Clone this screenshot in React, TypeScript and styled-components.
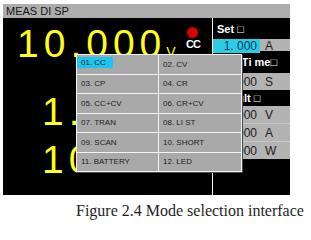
import React from 'react'
import styled, { createGlobalStyle } from 'styled-components'

const GlobalStyle = createGlobalStyle`
  html, body {
    margin: 0;
    padding: 0;
    background: #ffffff;
  }
`

const modes = [
  '01. CC', '02. CV',
  '03. CP', '04. CR',
  '05. CC+CV', '06. CR+CV',
  '07. TRAN', '08. LI ST',
  '09. SCAN', '10. SHORT',
  '11. BATTERY', '12. LED',
]

const readings = [
  { value: '10.000', unit: 'V', indent: 14, top: 2 },
  { value: '1.000', unit: 'A', indent: 39, top: 20 },
  { value: '10.000', unit: 'W', indent: 39, top: 0 },
]

const sideRows = [
  { label: 'Set \u25A1', values: [{ value: '1. 000', unit: 'A', active: true }], labelHeight: 21 },
  { label: 'Test Ti me\u25A1', values: [{ value: '1. 000', unit: 'S' }], labelHeight: 22 },
  { label: 'Result \u25A1', values: [
    { value: '10. 000', unit: 'V' },
    { value: '1. 000', unit: 'A' },
    { value: '10. 000', unit: 'W' },
  ], labelHeight: 16 },
]

const Page = styled.div`
  padding: 4px 0 0 3px;
`

const Screen = styled.div`
  position: relative;
  width: 287px;
  height: 191px;
  background: #000;
  display: flex;
  flex-direction: column;
  overflow: hidden;
`

const TitleBar = styled.div`
  height: 14px;
  background: #adadad;
  color: #141414;
  font: 11px/14px 'Liberation Sans', Arial, sans-serif;
  padding-left: 3px;
  flex: none;
`

const Body = styled.div`
  flex: 1;
  display: flex;
`

const Readings = styled.div`
  width: 209px;
  flex: none;
  position: relative;
  overflow: hidden;
`

const ReadingLine = styled.div<{ $indent: number; $top: number }>`
  display: flex;
  align-items: baseline;
  padding-left: ${p => p.$indent}px;
  margin-top: ${p => p.$top}px;
  height: 48px;
  color: #ffff1a;
  white-space: nowrap;
`

const Digits = styled.span`
  font: 39px/48px 'Liberation Sans', Arial, sans-serif;
  letter-spacing: 5px;
`

const Unit = styled.span`
  font: 14px 'Liberation Sans', Arial, sans-serif;
  margin-left: 0px;
`

const Status = styled.div`
  position: absolute;
  top: 9px;
  left: 183px;
  display: flex;
  flex-direction: column;
  align-items: center;
  gap: 1px;
`

const Lamp = styled.div`
  width: 11px;
  height: 11px;
  border-radius: 50%;
  background: #d80000;
`

const StatusText = styled.span`
  color: #fff;
  font: bold 11px/11px 'Liberation Sans', Arial, sans-serif;
  letter-spacing: -1px;
`

const Side = styled.div`
  flex: 1;
  border-left: 1px solid #f2f2f2;
  display: flex;
  flex-direction: column;
`

const SideLabel = styled.div<{ $h: number }>`
  height: ${p => p.$h}px;
  display: flex;
  align-items: center;
  padding-left: 4px;
  color: #fff;
  font: bold 11px 'Liberation Sans', Arial, sans-serif;
  white-space: nowrap;
`

const ValueRow = styled.div<{ $h: number }>`
  height: ${p => p.$h}px;
  display: grid;
  grid-template-columns: 47px 1fr;
  align-items: center;
  background: #b3b3b3;
  color: #1c1c1c;
  font: 12px 'Liberation Sans', Arial, sans-serif;
  & + & {
    border-top: 1px solid #c8c8c8;
  }
`

const Value = styled.span<{ $active?: boolean }>`
  height: 100%;
  display: flex;
  align-items: center;
  justify-content: flex-end;
  padding-right: 3px;
  background: ${p => (p.$active ? '#2ccde4' : 'transparent')};
  color: ${p => (p.$active ? '#0d3a60' : '#1c1c1c')};
`

const ValueUnit = styled.span`
  padding-left: 5px;
`

const ModeMenu = styled.div`
  position: absolute;
  left: 73px;
  top: 50px;
  width: 164px;
  display: grid;
  grid-template-columns: 81px 1fr;
  grid-auto-rows: 18.5px;
  gap: 1px;
  background: #f4f4f4;
  border: 1px solid #f4f4f4;
  box-shadow: 1px 1px 0 #4a4a4a;
`

const ModeCell = styled.div`
  background: #a9a9a9;
  display: flex;
  align-items: center;
  padding-left: 0;
`

const ModeName = styled.span<{ $selected?: boolean }>`
  display: flex;
  align-items: center;
  height: 11px;
  width: ${p => (p.$selected ? '32px' : 'auto')};
  padding-left: 4px;
  margin-top: ${p => (p.$selected ? '-3px' : '0')};
  background: ${p => (p.$selected ? '#1dc4ef' : 'transparent')};
  color: #222;
  font: 8px 'Liberation Sans', Arial, sans-serif;
  white-space: nowrap;
`

const Caption = styled.div`
  margin: 7px 0 0 73px;
  font: 16px/18px 'Liberation Serif', 'Times New Roman', serif;
  color: #1e1e1e;
`

export default function App() {
  return (
    <>
      <GlobalStyle />
      <Page>
        <Screen>
          <TitleBar>MEAS DI SP</TitleBar>
          <Body>
            <Readings>
              {readings.map(r => (
                <ReadingLine key={r.unit} $indent={r.indent} $top={r.top}>
                  <Digits>{r.value}</Digits>
                  <Unit>{r.unit}</Unit>
                </ReadingLine>
              ))}
              <Status>
                <Lamp />
                <StatusText>CC</StatusText>
              </Status>
            </Readings>
            <Side>
              {sideRows.map(row => (
                <React.Fragment key={row.label}>
                  <SideLabel $h={row.labelHeight}>{row.label}</SideLabel>
                  {row.values.map(v => (
                    <ValueRow key={v.unit} $h={v.active ? 12 : 17}>
                      <Value $active={v.active}>{v.value}</Value>
                      <ValueUnit>{v.unit}</ValueUnit>
                    </ValueRow>
                  ))}
                </React.Fragment>
              ))}
            </Side>
          </Body>
          <ModeMenu>
            {modes.map((m, i) => (
              <ModeCell key={m}>
                <ModeName $selected={i === 0}>{m}</ModeName>
              </ModeCell>
            ))}
          </ModeMenu>
        </Screen>
        <Caption>Figure 2.4 Mode selection interface</Caption>
      </Page>
    </>
  )
}
